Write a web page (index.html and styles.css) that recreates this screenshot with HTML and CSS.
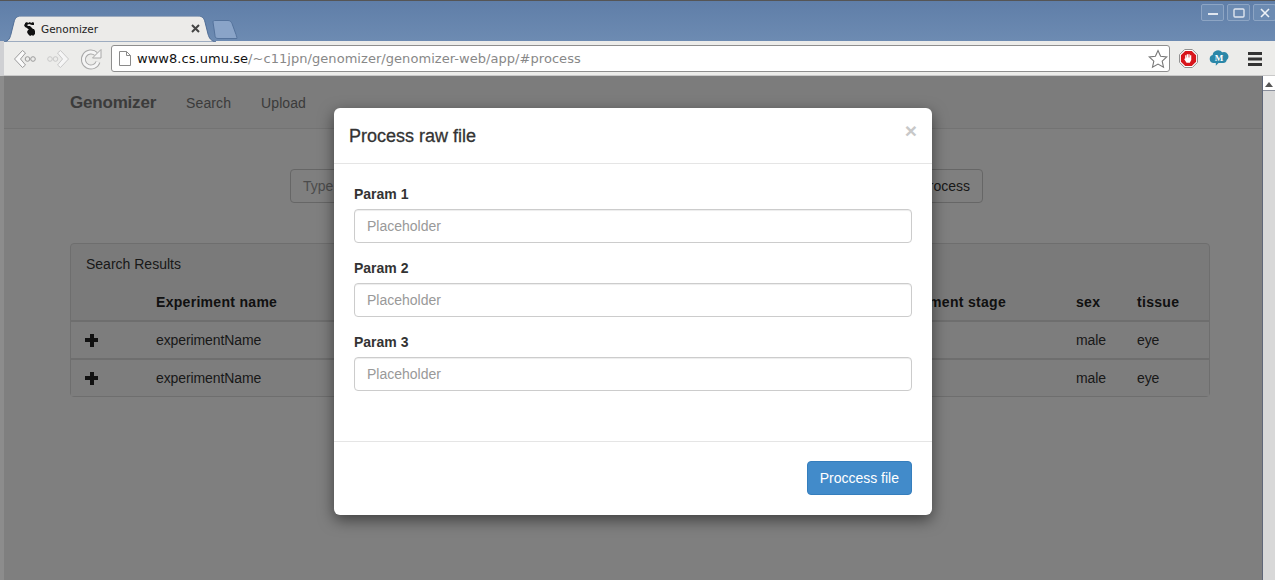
FILE: index.html
```html
<!DOCTYPE html>
<html lang="en">
<head>
    <meta charset="UTF-8">
    <title>Genomizer</title>
    <link rel="stylesheet" href="styles.css">
</head>
<body>
    <div class="titlebar">
        <div class="tab">
            <svg class="tab-shape" width="212" height="26" viewBox="0 0 212 26"><path d="M0 26c5-1 6-4 7-8l3-12c1-4 3-6 7-6h177c4 0 6 2 7 6l3 12c1 4 3 7 8 8z" fill="#ecebe9" stroke="#4f6d96"/></svg>
            <svg class="favicon" width="13" height="16" viewBox="0 0 13 16"><path d="M1 2l2-1 1 1 2-1 1 1 2-1 1 1v2h-2l-3-1-2 1 1 1h2l1 1 2 2h1l1 2v3l-2 2-1-1-2 1-2-2-1-2 1-2h1l-2-2-2-1-1-2 1-1z" fill="#111"/></svg>
            <span class="tab-title">Genomizer</span>
            <svg class="tab-close" width="9" height="9" viewBox="0 0 9 9"><path d="M1 1l7 7M8 1l-7 7" stroke="#444" stroke-width="2"/></svg>
        </div>
        <svg class="new-tab" width="26" height="19" viewBox="0 0 26 19"><path d="M1 2c0-1 1-1.500 2-1.500h13c2 0 3 1 4 3l4 11c.5 2 1 3 1 4h-19c-2 0-3-1-3-3z" fill="#8aa4c8" stroke="#55739c"/></svg>
        <div class="win-buttons">
            <span class="win-btn"><svg width="12" height="10" viewBox="0 0 12 10"><path d="M1 6h10" stroke="#dfe6ef" stroke-width="2"/></svg></span>
            <span class="win-btn"><svg width="12" height="10" viewBox="0 0 12 10"><rect x="1" y="1" width="10" height="8" rx="1" fill="none" stroke="#dfe6ef" stroke-width="1.400"/></svg></span>
            <span class="win-btn"><svg width="12" height="10" viewBox="0 0 12 10"><path d="M2 1l8 8M10 1l-8 8" stroke="#eef2f7" stroke-width="1.600"/></svg></span>
        </div>
    </div>
    <div class="toolbar">
        <svg class="nav-icon back" width="23" height="22" viewBox="0 0 23 22"><path d="M9.500 2.500L1.500 11l8 8.500 3-2.500-5-6 5-6z" fill="#fafafa" stroke="#9c9c9c" stroke-linejoin="round"/><circle cx="14.500" cy="11" r="2.300" fill="none" stroke="#9c9c9c"/><circle cx="20" cy="11" r="2.300" fill="none" stroke="#9c9c9c"/></svg>
        <svg class="nav-icon forward" width="23" height="22" viewBox="0 0 23 22"><path d="M13.500 2.500l8 8.500-8 8.500-3-2.500 5-6-5-6z" fill="#f6f6f6" stroke="#c9c9c9" stroke-linejoin="round"/><circle cx="8.500" cy="11" r="2.300" fill="none" stroke="#c9c9c9"/><circle cx="3" cy="11" r="2.300" fill="none" stroke="#c9c9c9"/></svg>
        <svg class="nav-icon reload" width="22" height="22" viewBox="0 0 22 22"><path d="M17 14a7.500 7.500 0 1 1-2-8" fill="none" stroke="#a8a8a8" stroke-width="5"/><path d="M17 14a7.500 7.500 0 1 1-2-8" fill="none" stroke="#f5f5f5" stroke-width="3"/><path d="M20 1.500v8.500h-8.500z" fill="#f5f5f5" stroke="#a8a8a8" stroke-linejoin="round"/></svg>
        <div class="omnibox">
            <svg width="12" height="15" viewBox="0 0 12 15"><path d="M.5.5h7l4 4v10h-11z" fill="#fff" stroke="#8a8a8a"/><path d="M7.500.5v4h4" fill="none" stroke="#8a8a8a"/></svg>
            <span class="url"><span class="url-host">www8.cs.umu.se</span>/~c11jpn/genomizer/genomizer-web/app/#process</span>
            <svg class="star" width="20" height="20" viewBox="0 0 20 20"><path d="M10 1.500l2.600 5.700 6.200.7-4.600 4.200 1.300 6.100-5.500-3.100-5.500 3.100 1.300-6.100-4.600-4.200 6.200-.7z" fill="#fff" stroke="#777" stroke-width="1.100"/></svg>
        </div>
        <svg class="ext-icon" width="19" height="19" viewBox="0 0 20 20"><path d="M6 .5h8l5.500 5.500v8l-5.500 5.500h-8l-5.500-5.500v-8z" fill="#fff" stroke="#888"/><path d="M6.500 2h7l4.500 4.500v7l-4.500 4.500h-7l-4.500-4.500v-7z" fill="#d8161c"/><path d="M6.500 10V6.500h1.300V9h.4V5.500h1.300V9h.4V5.500h1.300V9h.4V6.500h1.300v5l-1.500 3h-3.500l-2.500-4z" fill="#fff"/></svg>
        <svg class="ext-icon cloud" width="20" height="19" viewBox="0 0 22 20"><path d="M5 15a4.500 4.500 0 0 1-1-8.800 6 6 0 0 1 10.500-3 5 5 0 0 1 5 8.500 4 4 0 0 1-4 3.300h-5l-3 3v-3z" fill="#2b87a8"/><text x="11" y="12.500" class="ext-m">M</text></svg>
        <svg class="menu-icon" width="14" height="14" viewBox="0 0 14 14"><path d="M0 0h14v3h-14zM0 5.500h14v3h-14zM0 11h14v3h-14z" fill="#333"/></svg>
    </div>
    <div class="viewport">
        <div class="page">
            <nav class="navbar">
                <span class="brand">Genomizer</span>
                <a class="nav-link">Search</a>
                <a class="nav-link">Upload</a>
            </nav>
            <div class="search-row">
                <div class="search-input">Type</div>
                <div class="process-btn">Process</div>
            </div>
            <section class="panel">
                <div class="panel-heading">Search Results</div>
                <table class="results">
                    <thead>
                        <tr>
                            <th class="col-icon"></th>
                            <th class="col-name">Experiment name</th>
                            <th class="col-stage">Development stage</th>
                            <th class="col-sex">sex</th>
                            <th class="col-tissue">tissue</th>
                        </tr>
                    </thead>
                    <tbody>
                        <tr>
                            <td class="cell-plus"><span class="plus"></span></td>
                            <td>experimentName</td>
                            <td></td>
                            <td>male</td>
                            <td>eye</td>
                        </tr>
                        <tr>
                            <td class="cell-plus"><span class="plus"></span></td>
                            <td>experimentName</td>
                            <td></td>
                            <td>male</td>
                            <td>eye</td>
                        </tr>
                    </tbody>
                </table>
            </section>
            <div class="backdrop"></div>
            <div class="modal">
                <div class="modal-header">
                    <h4>Process raw file</h4>
                    <span class="close">&times;</span>
                </div>
                <form class="modal-body">
                    <label for="p1">Param 1</label>
                    <input id="p1" type="text" placeholder="Placeholder">
                    <label for="p2">Param 2</label>
                    <input id="p2" type="text" placeholder="Placeholder">
                    <label for="p3">Param 3</label>
                    <input id="p3" type="text" placeholder="Placeholder">
                </form>
                <div class="modal-footer">
                    <button type="button" class="btn-primary">Proccess file</button>
                </div>
            </div>
        </div>
        <div class="scrollbar"><span class="scroll-up"></span></div>
    </div>
</body>
</html>
```

FILE: styles.css
```css
* {
    box-sizing: border-box;
}
html, body {
    margin: 0;
    height: 100%;
    overflow: hidden;
}
body {
    font-family: "Liberation Sans", Arial, sans-serif;
    font-size: 14px;
    color: #333;
    display: flex;
    flex-direction: column;
    height: 580px;
}

/* browser chrome */
.titlebar {
    height: 41px;
    background: linear-gradient(#5f7ea8, #6d8bb2);
    border-top: 1px solid #555;
    display: flex;
    align-items: flex-end;
    padding-left: 4px;
    flex-shrink: 0;
}
.tab {
    position: relative;
    width: 208px;
    height: 25px;
    display: flex;
    align-items: center;
    padding: 0 12px 0 20px;
    font-family: "DejaVu Sans", sans-serif;
    font-size: 10.500px;
    color: #222;
}
.tab-shape {
    position: absolute;
    left: 0;
    top: 0;
}
.favicon, .tab-title, .tab-close {
    position: relative;
}
.tab-title {
    flex: 1;
    margin-left: 4px;
}
.new-tab {
    margin: 0 0 2px 0;
}
.win-buttons {
    margin-left: auto;
    align-self: flex-start;
    display: flex;
    gap: 3px;
    margin-top: 3px;
    margin-right: -1px;
}
.win-btn {
    width: 23px;
    height: 17px;
    border: 1px solid #8da5c4;
    border-radius: 2px;
    background: #6c8bb2;
    display: flex;
    align-items: center;
    justify-content: center;
}
.toolbar {
    height: 35px;
    background: #ececea;
    border-left: 4px solid #cfd0d3;
    border-bottom: 1px solid #c9c9c9;
    display: flex;
    align-items: center;
    padding: 1px 0 0 9px;
    flex-shrink: 0;
}
.nav-icon.back {
    margin-right: 11px;
}
.nav-icon.forward {
    margin-right: 11px;
}
.omnibox {
    width: 1059px;
    height: 27px;
    margin-left: 8px;
    background: #fff;
    border: 1px solid #8e8e8e;
    border-radius: 3px;
    display: flex;
    align-items: center;
    padding: 0 1px 0 7px;
    font-family: "DejaVu Sans", sans-serif;
    font-size: 13px;
    letter-spacing: 0.05px;
    color: #888;
}
.url {
    flex: 1;
    margin-left: 6px;
}
.url-host {
    color: #111;
}
.ext-icon {
    margin-left: 9px;
}
.ext-icon.cloud {
    margin-left: 11px;
}
.ext-m {
    font-family: "Liberation Serif", serif;
    font-size: 10px;
    font-weight: bold;
    fill: #fff;
    text-anchor: middle;
}
.menu-icon {
    margin-left: 19px;
}

/* page under the modal */
.viewport {
    flex: 1;
    display: flex;
    min-height: 0;
}
.page {
    flex: 1;
    position: relative;
    background: #fff;
    overflow: hidden;
    border-left: 4px solid #8c8c8c;
}
.navbar {
    height: 53px;
    background: #f8f8f8;
    border-bottom: 1px solid #e7e7e7;
    display: flex;
    align-items: center;
    padding: 1px 0 0 66px;
    color: #777;
}
.brand {
    font-size: 17px;
    font-weight: bold;
    letter-spacing: -0.2px;
    margin-right: 30px;
}
.nav-link {
    margin-right: 30px;
    letter-spacing: 0.1px;
}
.search-row {
    display: flex;
    justify-content: space-between;
    width: 693px;
    margin: 40px 0 0 286px;
}
.search-input, .process-btn {
    height: 34px;
    border: 1px solid #ccc;
    border-radius: 4px;
    display: flex;
    align-items: center;
    padding: 0 12px;
}
.search-input {
    width: 300px;
    color: #999;
}
.panel {
    margin: 40px 0 0 66px;
    width: 1140px;
    border: 1px solid #ddd;
    border-radius: 4px;
    background: #f5f5f5;
}
.panel-heading {
    padding: 10px 15px 9px;
    line-height: 20px;
}
.results {
    width: 100%;
    border-collapse: collapse;
    table-layout: fixed;
}
.results th {
    text-align: left;
    height: 38px;
    padding: 0 0 0 15px;
    border-bottom: 2px solid #ddd;
    color: #222;
    letter-spacing: 0.3px;
}
.results td {
    height: 38px;
    padding: 0 0 0 15px;
    border-top: 2px solid #ddd;
    background: #fbfbfb;
    letter-spacing: -0.1px;
}
.results tr + tr td {
    height: 37px;
}
.results .cell-plus {
    padding-left: 14px;
}
.col-icon {
    width: 70px;
}
.results .col-stage {
    width: 709px;
    text-align: right;
    padding-right: 55px;
}
.col-name {
    width: 211px;
}
.col-sex {
    width: 61px;
}
.plus {
    display: block;
    width: 13px;
    height: 13px;
    background: linear-gradient(#222, #222) center / 13px 4px no-repeat,
        linear-gradient(#222, #222) center / 4px 13px no-repeat;
}

/* modal */
.backdrop {
    position: absolute;
    inset: 0;
    background: rgba(0, 0, 0, 0.5);
}
.modal {
    position: absolute;
    left: 330px;
    top: 32px;
    width: 598px;
    height: 407px;
    background: #fff;
    border-radius: 6px;
    box-shadow: 0 5px 15px rgba(0, 0, 0, 0.5);
    display: flex;
    flex-direction: column;
}
.modal-header {
    height: 56px;
    border-bottom: 1px solid #e5e5e5;
    padding: 2px 15px 0;
    display: flex;
    align-items: center;
    justify-content: space-between;
}
.modal-header h4 {
    margin: 0;
    font-size: 18px;
    font-weight: 500;
    color: #333;
    -webkit-text-stroke: 0.3px #333;
}
.close {
    font-size: 21px;
    font-weight: bold;
    color: #c8c8c8;
    align-self: flex-start;
    margin: 9px 0 0;
    line-height: 24px;
}
.modal-body {
    flex: 1;
    padding: 20px;
    display: flex;
    flex-direction: column;
}
.modal-body label {
    font-weight: bold;
    line-height: 20px;
    margin-bottom: 5px;
}
.modal-body input {
    height: 34px;
    border: 1px solid #ccc;
    border-radius: 4px;
    padding: 0 12px;
    margin-bottom: 15px;
    font: 14px "Liberation Sans", Arial, sans-serif;
    box-shadow: inset 0 1px 1px rgba(0, 0, 0, 0.075);
}
.modal-body input::placeholder {
    color: #999;
}
.modal-footer {
    height: 74px;
    border-top: 1px solid #e5e5e5;
    padding: 19px 20px 0;
    display: flex;
    justify-content: flex-end;
    align-items: flex-start;
}
.btn-primary {
    height: 34px;
    padding: 0 12px;
    background: #428bca;
    border: 1px solid #357ebd;
    border-radius: 4px;
    color: #fff;
    font: 14px "Liberation Sans", Arial, sans-serif;
}

.scrollbar {
    width: 13px;
    background: #d8d8d8;
    border-left: 1px solid #5e6678;
    flex-shrink: 0;
}
.scroll-up {
    display: block;
    height: 15px;
    background: #fff;
    border-bottom: 1px solid #8a8f9c;
    position: relative;
}
.scroll-up::after {
    content: "";
    position: absolute;
    left: 2px;
    top: 6px;
    border: 4px solid transparent;
    border-top-width: 0;
    border-bottom: 5px solid #555;
}
```
